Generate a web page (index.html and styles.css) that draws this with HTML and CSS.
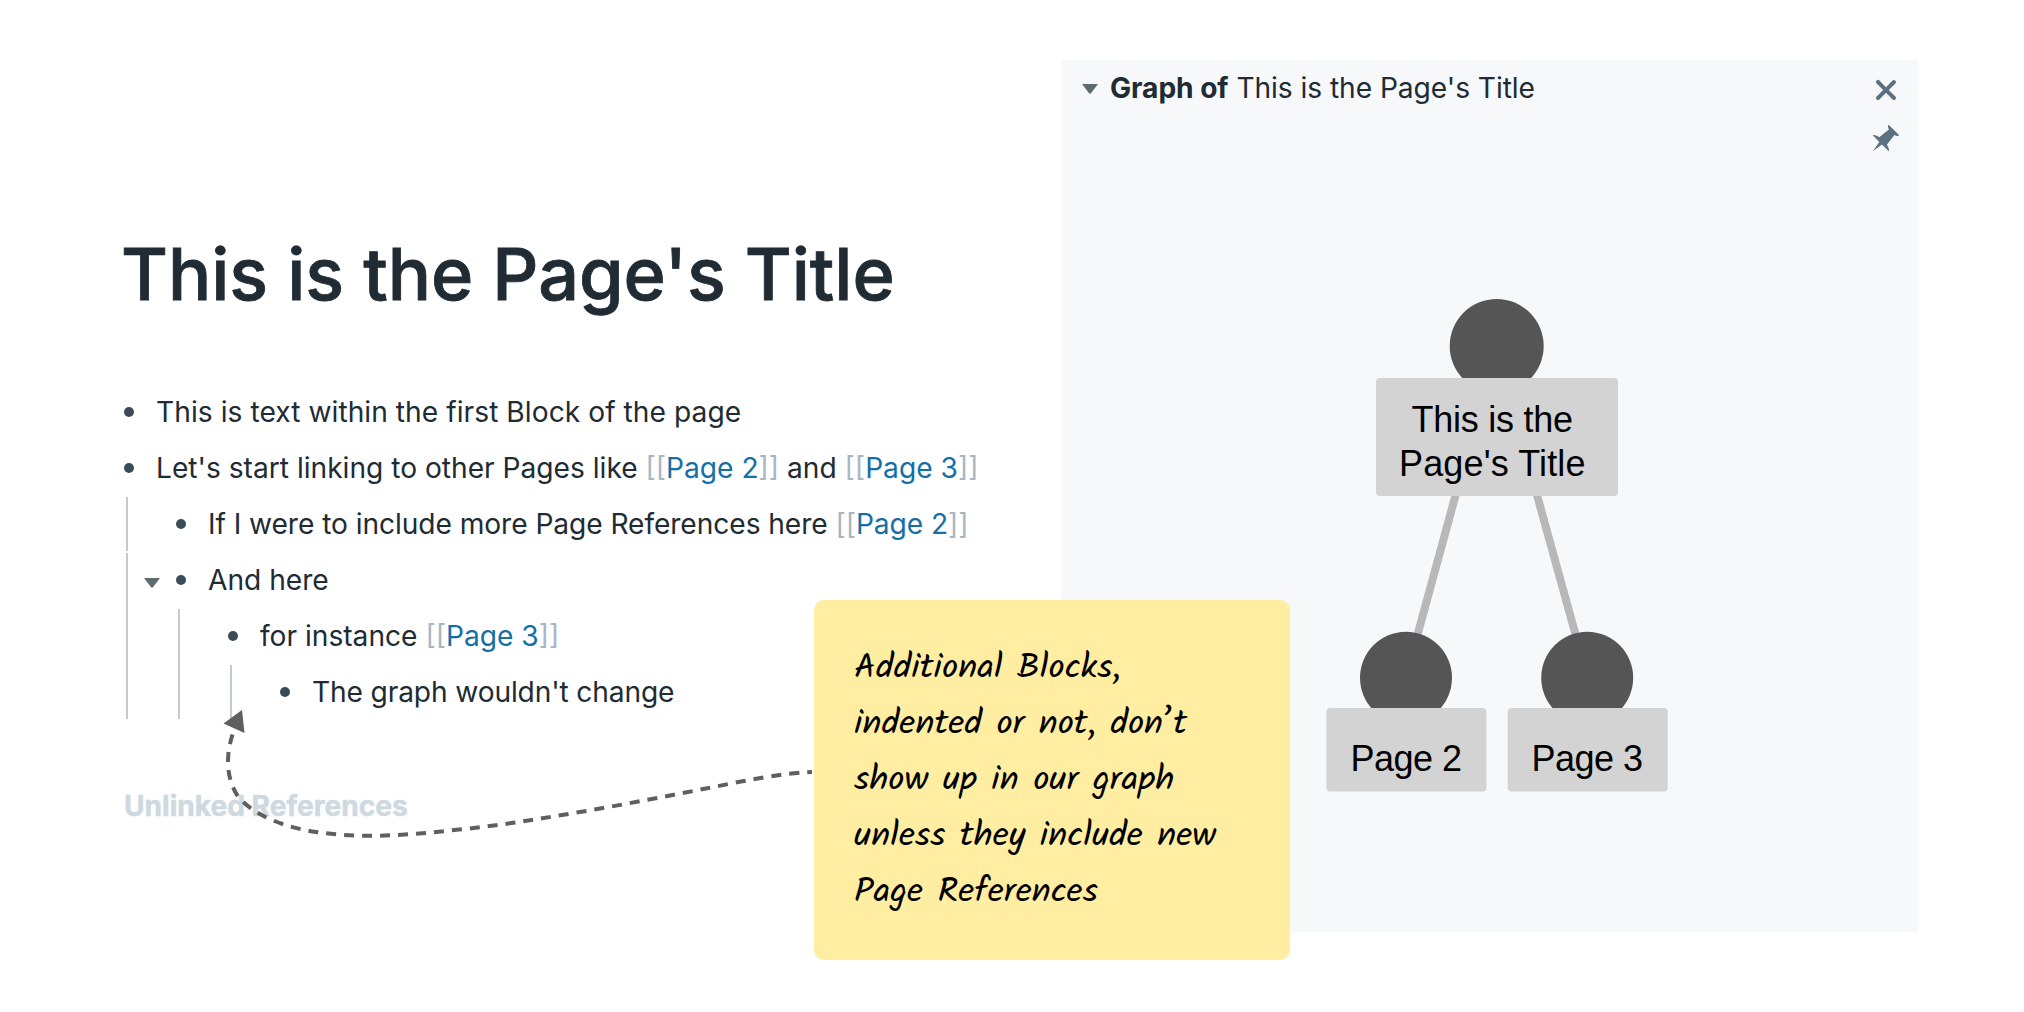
FILE: index.html
```html
<!DOCTYPE html>
<html lang="en">
<head>
<meta charset="utf-8">
<title>This is the Page's Title</title>
<link rel="stylesheet" href="styles.css">
</head>
<body>
<div class="app">
  <main class="page">
    <h1 class="title">This is the Page's Title</h1>
    <ul class="blocks">
      <li><div class="block block-loose"><i class="bullet"></i><span>This is text within the first Block of the page</span></div></li>
      <li>
        <div class="block"><i class="bullet"></i><span>Let's start linking to other Pages like <b>[[</b><a>Page 2</a><b>]]</b> and <b>[[</b><a>Page 3</a><b>]]</b></span></div>
        <ul class="children">
          <li class="guide"><div class="block block-snug"><i class="bullet"></i><span>If I were to include more Page References here <b>[[</b><a>Page 2</a><b>]]</b></span></div></li>
          <li class="guide">
            <div class="block"><svg class="caret" viewBox="0 0 16 10"><path d="M0 0h16L9 9.3q-1 .9-2 0z"/></svg><i class="bullet"></i><span>And here</span></div>
            <ul class="children">
              <li class="guide">
                <div class="block"><i class="bullet"></i><span>for instance <b>[[</b><a>Page 3</a><b>]]</b></span></div>
                <ul class="children">
                  <li class="guide"><div class="block block-tight"><i class="bullet"></i><span>The graph wouldn't change</span></div></li>
                </ul>
              </li>
            </ul>
          </li>
        </ul>
      </li>
    </ul>
    <h2 class="unlinked">Unlinked References</h2>
  </main>
  <aside class="sidebar">
    <header class="bar">
      <svg class="bar-caret" viewBox="0 0 16 10"><path d="M0 0h16L9 9.3q-1 .9-2 0z"/></svg>
      <p class="bar-title"><strong>Graph of</strong> This is the Page's Title</p>
      <div class="tools">
        <svg class="close" viewBox="0 0 16 16"><path d="M9.41 8l3.29-3.29c.19-.18.3-.43.3-.71a1.003 1.003 0 00-1.71-.71L8 6.59l-3.29-3.3a1.003 1.003 0 00-1.42 1.42L6.59 8 3.3 11.29c-.19.18-.3.43-.3.71a1.003 1.003 0 001.71.71L8 9.41l3.29 3.29c.18.19.43.3.71.3a1.003 1.003 0 00.71-1.71L9.41 8z"/></svg>
        <svg class="pin" viewBox="0 0 16 16"><path d="M9.41.92c-.51.51-.41 1.5.15 2.56L4.34 7.54C2.8 6.48 1.45 6.05.92 6.58l3.54 3.54-3.54 4.95 4.95-3.54 3.54 3.54c.53-.53.1-1.88-.96-3.42l4.06-5.22c1.06.56 2.04.66 2.55.15L9.41.92z"/></svg>
      </div>
    </header>
    <svg class="graph" viewBox="1062 180 856 751">
      <g class="edges"><path d="M1496.5 345L1406 677M1495.5 345L1587.3 677"/></g>
      <g class="nodes"><circle cx="1496.7" cy="346" r="47"/><circle cx="1406" cy="677.8" r="46"/><circle cx="1587.2" cy="677.8" r="46"/></g>
      <g class="labels"><rect x="1376" y="378" width="242" height="118" rx="4"/><rect x="1326.4" y="708" width="160" height="83.5" rx="4"/><rect x="1507.7" y="708" width="160" height="83.5" rx="4"/></g>
      <g class="names">
        <text x="1411.5" y="431.5" textLength="161.5">This is the</text>
        <text x="1399" y="475.5" textLength="186.5">Page's Title</text>
        <text x="1350.5" y="771" textLength="111.5">Page 2</text>
        <text x="1531.5" y="771" textLength="111.5">Page 3</text>
      </g>
    </svg>
  </aside>
  <div class="note">Additional Blocks,<br>indented or not, don’t<br>show up in our graph<br>unless they include new<br>Page References</div>
  <svg class="arrow" viewBox="210 700 610 150">
    <path class="arrow-line" d="M812 772C781 773 741 781.5 706 788.5C665 796.5 624 804.5 583 811.5C541 818.5 501 825.5 459 829.5C411 835 363 839 316 832C286 827.5 253 816 237 795C230.5 784 228 773 228 762C228 749 231 738 236 724"/>
    <path class="arrow-head" d="M242 710L223.5 723.5L244.5 733z"/>
  </svg>
</div>
</body>
</html>
```
FILE: styles.css
```css
* { box-sizing: border-box; }
body { margin: 0; background: #fff; }
.app {
  position: relative;
  display: grid;
  grid-template-columns: 1062px 856px;
  width: 2024px;
  height: 1012px;
  overflow: hidden;
  font: 28.15px/56px Inter, sans-serif;
  color: #202b33;
}
.page { padding: 230px 0 0 119px; white-space: nowrap; }
.title {
  margin: 0 0 0 2px;
  font-size: 72px;
  font-weight: 500;
  line-height: 88px;
  letter-spacing: -0.05px;
  -webkit-text-stroke: 0.8px #202b33;
}
.blocks { margin: 66px 0 0; padding: 0 0 0 5px; }
ul { list-style: none; }
.block { position: relative; display: flex; align-items: center; height: 56px; }
.block-loose { letter-spacing: 0.055px; }
.block-snug { letter-spacing: -0.06px; }
.block-tight { letter-spacing: -0.13px; }
.bullet { width: 10px; height: 10px; margin: -1px 22.5px 0 -0.5px; border-radius: 50%; background: #394b59; }
.block b { font-weight: 400; color: #a7b6c2; }
.block a { color: #146fa7; }
.children { margin: 0; padding: 0; }
.children > li { padding-left: 52px; margin: 0; }
.guide { background: linear-gradient(#bfccd6, #bfccd6) 2px 1px / 2px calc(100% - 2px) no-repeat; }
.caret { position: absolute; left: -32px; top: 26px; width: 16px; height: 10px; fill: #5f6b73; }
.unlinked { margin: 58px 0 0 5px; font-size: 28.1px; font-weight: 700; line-height: 56px; color: #ced9e0; -webkit-text-stroke: 0.5px #ced9e0; }
.sidebar { margin-top: 60px; height: 872px; background: #f6f8fa; }
.bar { display: flex; height: 120px; padding: 0 16px 0 20px; }
.bar-caret { width: 16px; height: 10px; margin: 24px 12px 0 0; fill: #5f6b73; }
.bar-title { flex: 1; margin: 0; letter-spacing: -0.05px; }
.tools { display: flex; flex-direction: column; align-items: center; width: 32px; padding-top: 14px; fill: #5c7080; }
.close { width: 32px; height: 32px; }
.pin { width: 30px; height: 30px; margin-top: 17px; }
.graph { display: block; width: 856px; height: 751px; }
.edges { fill: none; stroke: #b8b8b8; stroke-width: 8; }
.nodes { fill: #555; }
.labels { fill: #d3d3d3; }
.names { font: 36px "Liberation Sans", Arial, sans-serif; fill: #000; }
.note {
  position: absolute;
  left: 814px;
  top: 600px;
  width: 476px;
  height: 360px;
  padding: 41px 40px 39px;
  border-radius: 10px;
  background: #ffeda1;
  color: #000;
  font: 35.7px/56px Kalam, "Comic Neue", Lato, cursive;
  white-space: nowrap;
}
.arrow { position: absolute; left: 210px; top: 700px; width: 610px; height: 150px; }
.arrow-line { fill: none; stroke: #5f5f5f; stroke-width: 4; stroke-dasharray: 10 8; stroke-dashoffset: 5; }
.arrow-head { fill: #5f5f5f; }
```
